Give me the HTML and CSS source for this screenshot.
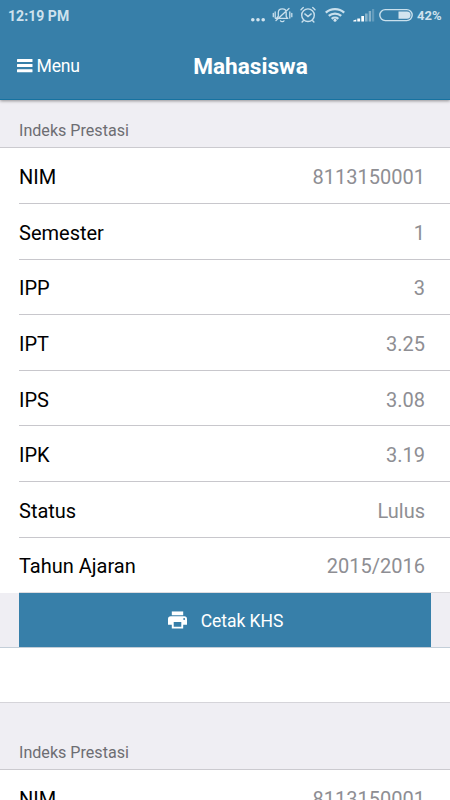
FILE: index.html
```html
<!DOCTYPE html>
<html lang="id">
<head>
<meta charset="utf-8">
<title>Mahasiswa</title>
<link rel="stylesheet" href="styles.css">
</head>
<body>
<div class="screen">
  <header class="header">
    <div class="status">
      <span class="clock">12:19 PM</span>
      <svg class="status-icons" width="164" height="24" viewBox="0 0 164 24" fill="none" stroke="#c9e0ed">
        <g fill="#d2e4ef" stroke="none"><circle cx="3.800" cy="19.800" r="1.800"/><circle cx="9" cy="19.800" r="1.800"/><circle cx="14.200" cy="19.800" r="1.800"/></g>
        <g stroke-width="1.300" stroke-linecap="round">
          <path d="M27.500 18.300h11l-1.300-2v-3.900c0-2.300-1.600-3.600-3.900-3.600s-4 1.300-4 3.600v3.900zM31.500 20.800c.5 1.200 3 1.200 3.500 0M40 8.500l-13 12M26.200 12v6M24.300 13.300v3.400M40.800 12v6M42.800 13.300v3.400"/>
        </g>
        <g stroke-width="1.400" stroke-linecap="round">
          <circle cx="59" cy="15.200" r="6.300"/><path d="M55.800 13.900l3.200 2.600 3.200-2.600M52 9.700l2.300-2.100M66 9.700l-2.300-2.100M54.300 20.700l-1.200 1.300M63.700 20.700l1.200 1.300"/>
        </g>
        <g stroke-width="2.300">
          <path d="M76.800 12.700c5-4.700 13.400-4.700 18.400 0M79.800 15.900c3.400-3 9-3 12.400 0M82.700 18.800c1.800-1.600 4.800-1.600 6.600 0"/>
          <circle cx="86" cy="20.300" r="1.500" fill="#d2e4ef" stroke="none"/>
        </g>
        <g stroke="none" fill="#fff">
          <path d="M104.300 21.500v-.9l3-1.200v2.100zM108.300 18.500h2.800v3h-2.800zM112.300 16h2.700v5.500h-2.700z"/>
          <path opacity=".4" d="M116 13.500h2.600v8H116zM119.700 11h2.400v10.500h-2.400z"/>
          <path opacity=".22" d="M123 9h2.200v12.500H123z"/>
        </g>
        <rect x="130.800" y="9.600" width="32.400" height="11" rx="5.500" stroke-width="1.400"/>
        <path d="M149.500 11.500h8.500a3.600 3.600 0 0 1 0 7.200h-8.500z" fill="#d2e4ef" stroke="none"/>
      </svg>
      <span class="percent">42%</span>
    </div>
    <nav class="toolbar">
      <div class="menu">
        <svg width="16" height="14" viewBox="0 0 16 14" fill="#fff"><rect y="0" width="15.500" height="3" rx=".5"/><rect y="5.100" width="15.500" height="3" rx=".5"/><rect y="10.200" width="15.500" height="3" rx=".5"/></svg>
        <span>Menu</span>
      </div>
      <h1 class="title">Mahasiswa</h1>
    </nav>
  </header>
  <main>
    <h2 class="heading">Indeks Prestasi</h2>
    <dl class="list">
      <div class="row"><dt>NIM</dt><dd>8113150001</dd></div>
      <div class="row"><dt>Semester</dt><dd>1</dd></div>
      <div class="row"><dt>IPP</dt><dd>3</dd></div>
      <div class="row"><dt>IPT</dt><dd>3.25</dd></div>
      <div class="row"><dt>IPS</dt><dd>3.08</dd></div>
      <div class="row"><dt>IPK</dt><dd>3.19</dd></div>
      <div class="row"><dt>Status</dt><dd>Lulus</dd></div>
      <div class="row row-last"><dt>Tahun Ajaran</dt><dd>2015/2016</dd></div>
    </dl>
    <div class="action">
      <div class="button">
        <svg width="19" height="18" viewBox="0 0 20 18" fill="#fff"><path d="M4 0h12v4H4z"/><path fill-rule="evenodd" d="M3 5h14a3 3 0 0 1 3 3v6h-4v4H4v-4H0V8a3 3 0 0 1 3-3zM6 11v5h8v-5zM17 7a1 1 0 1 0 0 2 1 1 0 0 0 0-2z"/></svg>
        <span>Cetak KHS</span>
      </div>
    </div>
    <div class="spacer"></div>
    <h2 class="heading heading-next">Indeks Prestasi</h2>
    <dl class="list">
      <div class="row"><dt>NIM</dt><dd>8113150001</dd></div>
    </dl>
  </main>
</div>
</body>
</html>
```
FILE: styles.css
```css
* { box-sizing: border-box; margin: 0; padding: 0; }
body { font-family: Roboto, sans-serif; background: #fff; overflow: hidden; }
svg { display: block; flex: none; }
.screen { height: 800px; overflow: hidden; background: #fff; }
.header { position: relative; height: 100px; background: #377fa9; border-bottom: 1px solid #1672a0; box-shadow: 0 1px 3px rgba(0, 0, 0, .4); color: #fff; }
.status { display: flex; height: 32px; padding: 0 8px; color: #cfe2ee; font-weight: 700; }
.clock { font-size: 14px; line-height: 32px; width: 62px; white-space: nowrap; letter-spacing: .05px; }
.status-icons { margin-left: 179px; }
.percent { margin-left: 4px; font-size: 13px; line-height: 31px; }
.toolbar { display: grid; grid-template-columns: 1fr auto 1fr; align-items: center; height: 68px; padding: 0 16.5px; }
.menu { display: flex; align-items: center; gap: 4px; font-size: 17.6px; height: 66px; margin-bottom: 2px; }
.menu span { letter-spacing: -.2px; }
.title { font-size: 22.6px; font-weight: 700; line-height: 68px; padding: 1px 0 0 51px; }
.heading { display: flex; align-items: flex-end; height: 48px; padding: 0 19px 6px; background: #efeef3; border-bottom: 1px solid #cbcacf; color: #6d6d72; font-size: 16.1px; font-weight: 400; line-height: 20px; }
.heading-next { height: 68px; border-top: 1px solid #d5d4d9; }
.row { display: flex; justify-content: space-between; align-items: center; height: 55.64px; margin-left: 19px; padding: 3px 25px 0 0; border-bottom: 1px solid #c8c7cc; font-size: 20px; }
.row:first-child { height: 55.9px; }
.row-last { height: 55.26px; border-bottom-color: #dddce0; }
.action { height: 55px; padding: 0 19px; background: #efeef3; border-bottom: 1px solid #c3ced8; }
.row dt { color: #000; }
.row dd { color: #8e8e93; }
.button { display: flex; align-items: center; justify-content: center; gap: 14px; height: 54px; padding-left: 1px; background: #377fa9; color: #fff; font-size: 17.5px; }
.button span { padding-top: 2px; letter-spacing: -.05px; }
.spacer { height: 54px; }
```
